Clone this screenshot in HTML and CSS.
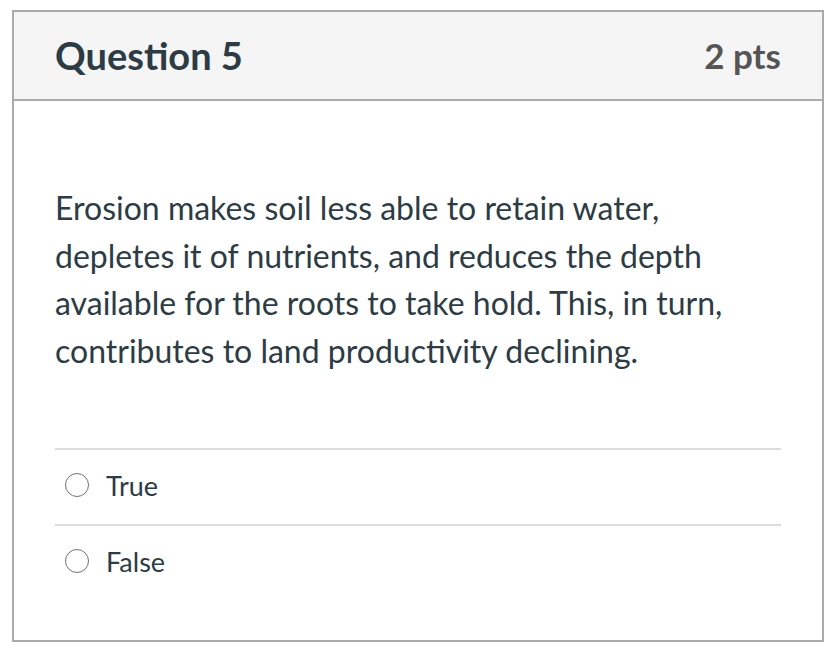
FILE: index.html
```html
<!DOCTYPE html>
<html>
<head>
<meta charset="utf-8">
<link rel="stylesheet" href="styles.css">
</head>
<body>
<div class="question">
  <div class="header">
    <h2 class="title">Question 5</h2>
    <span class="pts">2 pts</span>
  </div>
  <div class="content">
    <p class="text">Erosion makes soil less able to retain water, depletes it of nutrients, and reduces the depth available for the roots to take hold. This, in turn, contributes to land productivity declining.</p>
    <div class="answers">
      <label class="answer"><span class="radio"></span><span class="label">True</span></label>
      <label class="answer"><span class="radio"></span><span class="label">False</span></label>
    </div>
  </div>
</div>
</body>
</html>
```
FILE: styles.css
```css
html, body {
  margin: 0;
  padding: 0;
  background: #fff;
}
body {
  padding: 10px 0 0 12px;
  font-family: Lato, "Open Sans", sans-serif;
  color: #2d3b45;
}
.question {
  width: 808px;
  height: 628px;
  border: 2px solid #aaaaaa;
  display: flex;
  flex-direction: column;
}
.header {
  box-sizing: border-box;
  height: 89px;
  padding: 0 41px 1px 41px;
  background: #f5f5f5;
  border-bottom: 2px solid #aaaaaa;
  display: flex;
  align-items: center;
  justify-content: space-between;
}
.title {
  margin: 0;
  font-size: 38px;
  font-weight: 700;
  color: #2d3b45;
}
.pts {
  font-size: 35px;
  font-weight: 700;
  color: #555;
}
.content {
  padding: 83px 41px 0 41px;
}
.text {
  margin: 0;
  font-size: 32px;
  line-height: 47.5px;
}
.answers {
  margin-top: 74px;
}
.answer {
  display: flex;
  align-items: center;
  gap: 17px;
  box-sizing: border-box;
  height: 76px;
  padding: 0 0 4px 10px;
  border-top: 2px solid #dddddd;
}
.radio {
  width: 24px;
  height: 24px;
  border: 1.5px solid #707070;
  border-radius: 50%;
  box-sizing: border-box;
}
.label {
  font-size: 27px;
}
```
